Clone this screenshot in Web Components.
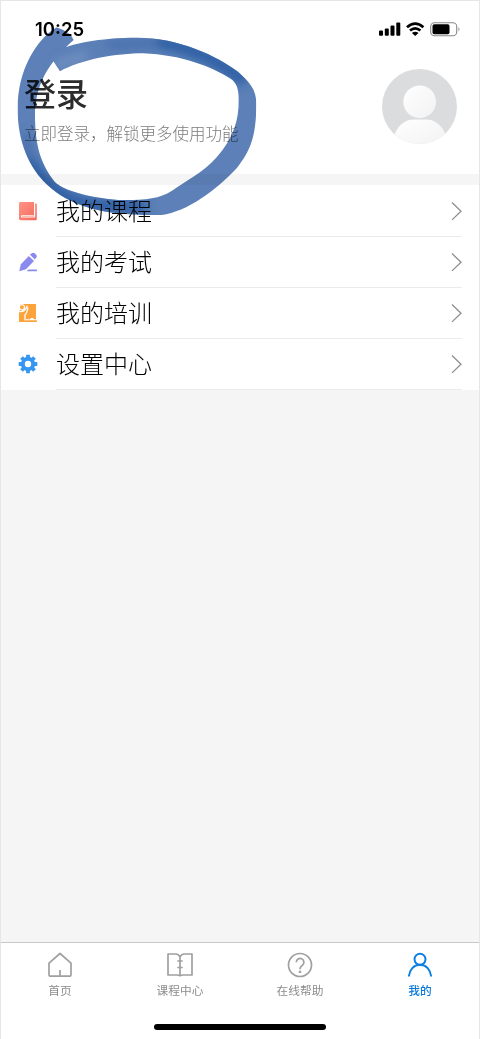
<!DOCTYPE html>
<html lang="zh-CN">
<head>
<meta charset="utf-8">
<meta name="viewport" content="width=device-width, initial-scale=1">
<title>我的</title>
<style>
    body {
        margin: 0;
        font-family: "Noto Sans CJK SC", sans-serif;
        background: #f5f5f5;
    }
</style>
</head>
<body>
<mine-page></mine-page>

<script>
const icons = {
    book: `<svg width="20" height="20" viewBox="0 0 20 20">
        <defs><linearGradient id="g" x2="1" y2="1"><stop stop-color="#ff9485"/><stop offset="1" stop-color="#f4695c"/></linearGradient></defs>
        <path fill="url(#g)" d="M2.500 1H16v13.200H4.200c-1.700 0-1.700 2.400 0 2.400H17.200V2.400h.5c.7 0 1.100.4 1.100 1V18c0 .8-.4 1.200-1.200 1.200H2.800C1.600 19.200 1 18.600 1 17.500V2.500C1 1.500 1.500 1 2.500 1z"/>
        <path stroke="#f6a199" stroke-width=".8" d="M4 15.400h12.500"/></svg>`,
    pen: `<svg width="20" height="20" viewBox="0 0 20 20" fill="#8a89f0">
        <path d="M10.800 3.900l5.200 5.200-8 8.100-6.800 2 1.700-7z"/>
        <path d="M12 2.800l1.400-1.300c1-1 2.500-1 3.500 0l1.100 1.100c1 1 1 2.400 0 3.400L16.800 7.600z"/>
        <path d="M10.400 17.500h8.500v1.700H8.700z"/></svg>`,
    training: `<svg width="20" height="20" viewBox="0 0 20 20">
        <path fill="#fda33b" d="M2 1h16v18H2z"/>
        <path fill="#fda33b" d="M1 7.500h2V19H1zM17 17.300h2V19h-2z"/>
        <circle cx="3.900" cy="4.300" r="2.600" fill="#fda33b" stroke="#fff" stroke-width="1.200"/>
        <path fill="none" stroke="#fff" stroke-width="1.300" d="M1 8.300c3 .8 5.200 0 7-3l1.300-2.400M10 4.500L8.700 9.500 7 12v5.500"/>
        <path fill="none" stroke="#fff" stroke-width="1.100" d="M8 16.800h11M12.500 15.600h3"/></svg>`,
    gear: `<svg width="20" height="20" viewBox="0 0 20 20" fill="#3796f0" stroke="#3796f0">
        <circle cx="10" cy="10" r="5.200" fill="none" stroke-width="4"/>
        <path stroke-width="3.800" d="M10 .7v4M10 15.300v4M.7 10h4M15.300 10h4M3.500 3.500l2.800 2.800M13.700 13.700l2.800 2.800M3.500 16.500l2.800-2.800M13.700 6.300l2.800-2.800"/></svg>`,
    home: `<svg width="26" height="26" viewBox="0 0 26 26">
        <path d="M13 1.500L24 11.200v11.300q0 1.700-1.700 1.700H3.700Q2 24.200 2 22.500V11.200zM13 18v5.500"/></svg>`,
    course: `<svg width="28" height="26" viewBox="0 0 28 26">
        <path d="M14 4.800Q12.800 2.200 9.800 2H2v21h9q2.300 0 3 .8.700-.8 3-.8h9V2h-7.800Q15.200 2.200 14 4.800zV23.500M11.300 9h5.400M11.300 15.500h5.400"/></svg>`,
    help: `<svg width="26" height="26" viewBox="0 0 26 26">
        <circle cx="13" cy="13" r="11.500"/>
        <path d="M9.300 10.300a3.800 3.800 0 1 1 6.200 2.900c-1.600 1.200-2.500 1.700-2.500 4"/><path stroke-width="2.400" d="M13 18.700v2.300"/></svg>`,
    mine: `<svg width="26" height="26" viewBox="0 0 26 26">
        <circle cx="13" cy="7.300" r="5.500"/><path d="M1.800 24.500c.7-6.800 4.900-11.700 11.200-11.700s10.500 4.900 11.200 11.700"/></svg>`
};

class StatusBar extends HTMLElement {
    constructor() {
        super();
        this._shadowDOM = this.attachShadow({ mode: "open" });
    }
    connectedCallback() {
        this._shadowDOM.innerHTML = `
        <style>
            :host {
                display: flex;
                justify-content: space-between;
                align-items: center;
                height: 20px;
                padding: 0 18px 0 34px;
                font: 600 18.5px/20px Inter, sans-serif;
                letter-spacing: 0;
                color: #000;
            }
            svg { display: block; }
        </style>
        <span>10:25</span>
        <svg width="82" height="16" viewBox="0 0 82 16">
            <rect y="9.500" width="4" height="5.300" rx="1"/>
            <rect x="5.800" y="7.500" width="4" height="7.300" rx="1"/>
            <rect x="11.500" y="4.500" width="4" height="10.300" rx="1"/>
            <rect x="17.300" y="1.500" width="4" height="13.300" rx="1"/>
            <path fill="none" stroke="#000" stroke-width="2.700" d="M28 6.200q8.200-7.200 16.400 0M31 9.600q5.200-4.500 10.400 0"/>
            <path d="M32.900 12q3.300-2.300 6.600 0l-3.300 3z"/>
            <rect x="51.700" y="1.700" width="26" height="13" rx="3.800" fill="#fff" stroke="#888" stroke-width="1.100"/>
            <rect x="53.500" y="3.300" width="17" height="9.900" rx="1.800"/>
            <path fill="#888" d="M79.500 6q2 2.200 0 4.400z"/>
        </svg>`;
    }
}
customElements.define("status-bar", StatusBar);

class UserAvatar extends HTMLElement {
    constructor() {
        super();
        this._shadowDOM = this.attachShadow({ mode: "open" });
    }
    connectedCallback() {
        this._shadowDOM.innerHTML = `
        <style>
            :host { display: block; width: 76px; height: 76px; }
            svg { display: block; }
        </style>
        <svg width="76" height="76" viewBox="0 0 76 76">
            <defs>
                <clipPath id="round"><circle cx="37.500" cy="37.500" r="37.500"/></clipPath>
                <linearGradient id="shade" x2="1" y2="1"><stop stop-color="#fff"/><stop offset="1" stop-color="#f2f2f3"/></linearGradient>
            </defs>
            <g clip-path="url(#round)">
                <path fill="#dadcde" d="M0 0h76v76H0z"/>
                <circle cx="37.700" cy="32.700" r="16.300" fill="url(#shade)"/>
                <path fill="url(#shade)" d="M11 70C14 58 22 50.500 32 50.500h12c10 0 18 7.500 21 19.500v6H11z"/>
            </g>
        </svg>`;
    }
}
customElements.define("user-avatar", UserAvatar);

class ProfileHeader extends HTMLElement {
    constructor() {
        super();
        this._shadowDOM = this.attachShadow({ mode: "open" });
    }
    connectedCallback() {
        this._shadowDOM.innerHTML = `
        <style>
            :host {
                display: flex;
                justify-content: space-between;
                padding: 30px 21px 0 23px;
            }
            h1 {
                margin: 3px 0 0;
                font-size: 32px;
                line-height: 40px;
                font-weight: 500;
                color: #2c2c2c;
            }
            p {
                margin: 9px 0 0;
                font-size: 16.5px;
                line-height: 24px;
                color: #7c7c7c;
                font-weight: 300;
                white-space: nowrap;
            }
        </style>
        <div>
            <h1><slot name="title"></slot></h1>
            <p><slot name="hint"></slot></p>
        </div>
        <user-avatar></user-avatar>`;
    }
}
customElements.define("profile-header", ProfileHeader);

class MenuItem extends HTMLElement {
    constructor() {
        super();
        this._shadowDOM = this.attachShadow({ mode: "open" });
    }
    connectedCallback() {
        this._shadowDOM.innerHTML = `
        <style>
            :host {
                display: flex;
                align-items: center;
                height: 51px;
                padding: 0 17px;
                background: #fff;
            }
            svg { display: block; }
            .icon { padding-bottom: 2px; }
            .row {
                box-sizing: border-box;
                display: flex;
                flex: 1;
                align-items: center;
                justify-content: space-between;
                height: 51px;
                margin-left: 18px;
                border-bottom: 1px solid #ebebeb;
                font-size: 24px;
                font-weight: 300;
                line-height: 48px;
                color: #000;
            }
            .row span { padding-bottom: 2px; }
        </style>
        <div class="icon">${icons[this.getAttribute("icon")]}</div>
        <div class="row">
            <span><slot></slot></span>
            <svg width="11" height="20" viewBox="0 0 11 20" fill="none" stroke="#8e8e8e" stroke-width="1.300"><path d="M1 1.500l9 8.700-9 8.700"/></svg>
        </div>`;
    }
}
customElements.define("menu-item", MenuItem);

class TabItem extends HTMLElement {
    constructor() {
        super();
        this._shadowDOM = this.attachShadow({ mode: "open" });
    }
    connectedCallback() {
        this._shadowDOM.innerHTML = `
        <style>
            :host {
                display: flex;
                flex: 1;
                flex-direction: column;
                align-items: center;
                gap: 4px;
                font-size: 11.7px;
                line-height: 16px;
                color: #8c8c8c;
            }
            :host([active]) { color: #0878dc; font-weight: 500; }
            svg {
                display: block;
                fill: none;
                stroke: #a0a0a0;
                stroke-width: 1.7;
                stroke-linejoin: round;
            }
            :host([active]) svg { stroke: #0b7fe4; stroke-width: 2; }
        </style>
        ${icons[this.getAttribute("icon")]}
        <span><slot></slot></span>`;
    }
}
customElements.define("tab-item", TabItem);

class TabBar extends HTMLElement {
    constructor() {
        super();
        this._shadowDOM = this.attachShadow({ mode: "open" });
    }
    connectedCallback() {
        this._shadowDOM.innerHTML = `
        <style>
            :host {
                box-sizing: border-box;
                display: flex;
                flex-direction: column;
                align-items: center;
                justify-content: space-between;
                height: 97px;
                padding: 9px 0 9px;
                border-top: 1px solid #c9c9c9;
                background: #fff;
            }
            nav { display: flex; width: 480px; }
            .indicator {
                width: 172px;
                height: 6px;
                border-radius: 3px;
                background: #000;
            }
        </style>
        <nav><slot></slot></nav>
        <div class="indicator"></div>`;
    }
}
customElements.define("tab-bar", TabBar);

// translucent marker loop lying over the login area
class MarkerCircle extends HTMLElement {
    constructor() {
        super();
        this._shadowDOM = this.attachShadow({ mode: "open" });
    }
    connectedCallback() {
        this._shadowDOM.innerHTML = `
        <style>
            :host {
                position: absolute;
                top: 0;
                left: 0;
                mix-blend-mode: multiply;
                pointer-events: none;
            }
            svg { display: block; }
        </style>
        <svg width="280" height="230" viewBox="0 0 840 690">
            <defs>
                <clipPath id="loop">
                    <path d="M170 82C110 117 53 210 53 325C52 425 88 503 140 553C215 624 320 648 485 645C560 636 650 570 710 505C751 453 769 410 769 310C768 265 748 247 714 215C650 168 540 113 410 113C310 113 190 129 150 168L180 214C240 179 350 160 430 160C545 165 633 199 690 235C712 249 716 270 716 300C717 360 700 415 650 472C609 518 555 545 516 572C474 598 430 601 355 600C275 593 190 573 164 545C118 486 106 430 105 350C104 255 147 185 221 120Q214 98 170 82Z"/>
                </clipPath>
                <filter id="soft" filterUnits="userSpaceOnUse" x="0" y="0" width="840" height="690"><feGaussianBlur stdDeviation="14"/></filter>
                <filter id="edge" filterUnits="userSpaceOnUse" x="0" y="0" width="840" height="690"><feGaussianBlur stdDeviation="1.500"/></filter>
            </defs>
            <g filter="url(#edge)"><g clip-path="url(#loop)">
                <path fill="#5b80b7" d="M0 0h840v690H0z"/>
                <g fill="none" filter="url(#soft)">
                    <path stroke="#2c5da3" stroke-width="34" d="M82 470Q108 528 165 570T300 618L440 622"/>
                    <path stroke="#2c5da3" stroke-width="34" d="M470 125Q620 150 735 245"/>
                    <path stroke="#4870ad" stroke-width="26" d="M320 135L470 130M75 400L90 480"/>
                    <path stroke="#7592c2" stroke-width="24" d="M165 198L260 165"/>
                </g>
            </g></g>
        </svg>`;
    }
}
customElements.define("marker-circle", MarkerCircle);

class MinePage extends HTMLElement {
    constructor() {
        super();
        this._shadowDOM = this.attachShadow({ mode: "open" });
    }
    connectedCallback() {
        this._shadowDOM.innerHTML = `
        <style>
            :host {
                box-sizing: border-box;
                display: flex;
                flex-direction: column;
                width: 480px;
                height: 1039px;
                border: 1px solid #e6e6e6;
                border-bottom: 0;
                background: #f5f5f5;
                overflow: hidden;
            }
            .top {
                box-sizing: border-box;
                height: 173px;
                padding-top: 18px;
                background: #fff;
            }
            .menu {
                margin-top: 11px;
                padding-top: 1px;
                background: #fff;
            }
            tab-bar { margin-top: auto; }
        </style>
        <div class="top">
            <status-bar></status-bar>
            <profile-header>
                <span slot="title">登录</span>
                <span slot="hint">立即登录，解锁更多使用功能</span>
            </profile-header>
        </div>
        <div class="menu">
            <menu-item icon="book">我的课程</menu-item>
            <menu-item icon="pen">我的考试</menu-item>
            <menu-item icon="training">我的培训</menu-item>
            <menu-item icon="gear">设置中心</menu-item>
        </div>
        <tab-bar>
            <tab-item icon="home">首页</tab-item>
            <tab-item icon="course">课程中心</tab-item>
            <tab-item icon="help">在线帮助</tab-item>
            <tab-item icon="mine" active>我的</tab-item>
        </tab-bar>
        <marker-circle></marker-circle>`;
    }
}
customElements.define("mine-page", MinePage);
</script>
</body>
</html>
